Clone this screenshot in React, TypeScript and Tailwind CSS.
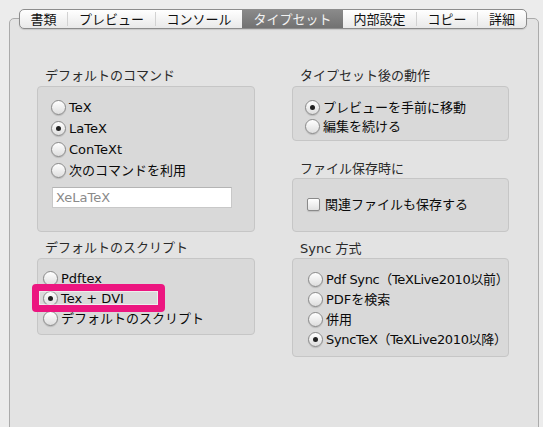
import type { ReactNode } from "react";

const FONT = '"DejaVu Sans", "Noto Sans CJK JP", sans-serif';

function Radio({ label, checked = false, tight = false }: { label: string; checked?: boolean; tight?: boolean }) {
  return (
    <div className="flex items-center gap-[3px]">
      <span className="flex h-[15px] w-[15px] shrink-0 items-center justify-center rounded-full border border-[#8a8a8a] bg-gradient-to-b from-[#ffffff] to-[#dedede] shadow-[0_1px_1px_rgba(0,0,0,0.15)]">
        {checked && <span className="h-[5px] w-[5px] rounded-full bg-[#222]" />}
      </span>
      <span className={`whitespace-nowrap text-[13px] leading-none text-[#0a0a0a] ${tight ? "tracking-[-0.35px]" : ""}`}>{label}</span>
    </div>
  );
}

function Section({ title, className = "", children }: { title: string; className?: string; children: ReactNode }) {
  return (
    <div className={className}>
      <div className="h-[16px] pl-[8px] text-[13px] leading-[16px] text-[#2a2a2a]">{title}</div>
      {children}
    </div>
  );
}

function GroupBox({ className = "", children }: { className?: string; children: ReactNode }) {
  return (
    <div className={`relative rounded-[4px] border border-[#c6c6c6] bg-[#d9d9d9] ${className}`}>
      {children}
    </div>
  );
}

const tabs: { label: string; w: string; selected?: boolean; sep?: boolean }[] = [
  { label: "書類", w: "w-[47px]", sep: true },
  { label: "プレビュー", w: "w-[87px]", sep: true },
  { label: "コンソール", w: "w-[86px]" },
  { label: "タイプセット", w: "w-[101px]", selected: true },
  { label: "内部設定", w: "w-[73px]", sep: true },
  { label: "コピー", w: "w-[60px]", sep: true },
  { label: "詳細", w: "w-[48px]" },
];

export default function App() {
  return (
    <div className="h-[427px] w-[543px] overflow-hidden bg-[#ececec] pt-[18px] pl-[9px]" style={{ fontFamily: FONT }}>
      <div className="relative h-[420px] w-[530px] rounded-t-[5px] border border-[#ababab] bg-[#e3e3e3]">
        {/* tab strip sitting on the panel's top edge */}
        <div className="absolute left-[9px] top-[-10px] flex h-[20px] w-[508px] items-center overflow-hidden rounded-[5px] border border-[#8c8c8c] bg-gradient-to-b from-[#ffffff] to-[#e9e9e9] shadow-[0_1px_1px_rgba(0,0,0,0.12)]">
          {tabs.map((t) => (
            <div key={t.label} className="flex h-full items-center">
              <div
                className={`flex h-full ${t.w} items-center justify-center text-[13px] leading-none ${
                  t.selected ? "bg-gradient-to-b from-[#8a8a8a] to-[#727272] text-[#f2f2f2]" : "text-[#111]"
                }`}
              >
                {t.label}
              </div>
              {t.sep && <div className="h-[14px] w-px bg-[#d2d2d2]" />}
            </div>
          ))}
        </div>

        <div className="flex gap-[37px] pt-[49px] pl-[27px]">
          {/* left column */}
          <div className="w-[218px]">
            <Section title="デフォルトのコマンド">
              <GroupBox className="mt-[2px] h-[146px] pt-[10px] pl-[13px]">
                <div className="flex flex-col">
                  <div className="flex h-[21px] items-center"><Radio label="TeX" /></div>
                  <div className="flex h-[21px] items-center"><Radio label="LaTeX" checked /></div>
                  <div className="flex h-[21px] items-center"><Radio label="ConTeXt" /></div>
                  <div className="flex h-[21px] items-center"><Radio label="次のコマンドを利用" /></div>
                </div>
                <div className="ml-px mt-[6px] flex h-[21px] w-[180px] items-center border border-[#c8c8c8] border-t-[#b4b4b4] bg-white pl-[3px] text-[13px] text-[#8a8a8a]">
                  XeLaTeX
                </div>
              </GroupBox>
            </Section>

            <Section title="デフォルトのスクリプト" className="mt-[8px]">
              <GroupBox className="mt-[2px] h-[77px] pt-[9px] pl-[5px]">
                <div className="flex flex-col">
                  <div className="flex h-[20px] items-center"><Radio label="Pdftex" /></div>
                  <div className="flex h-[20px] items-center"><Radio label="Tex + DVI" checked /></div>
                  <div className="flex h-[20px] items-center"><Radio label="デフォルトのスクリプト" /></div>
                </div>
                <div className="absolute left-[-6px] top-[25px] h-[28px] w-[133px] rounded-[4px] border-[7px] border-[#ec1680] shadow-[inset_0_0_0_1px_rgba(255,255,255,0.55)]" />
              </GroupBox>
            </Section>
          </div>

          {/* right column */}
          <div className="w-[217px]">
            <Section title="タイプセット後の動作">
              <GroupBox className="mt-[2px] h-[55px] pt-[11px] pl-[12px]">
                <div className="flex flex-col">
                  <div className="flex h-[19px] items-center"><Radio label="プレビューを手前に移動" checked /></div>
                  <div className="flex h-[19px] items-center"><Radio label="編集を続ける" /></div>
                </div>
              </GroupBox>
            </Section>

            <Section title="ファイル保存時に" className="mt-[20px]">
              <GroupBox className="mt-px h-[54px] pt-[15px] pl-[14px]">
                <div className="flex h-[20px] items-center gap-[5px]">
                  <span className="h-[13px] w-[13px] rounded-[2px] border border-[#8a8a8a] bg-gradient-to-b from-[#ffffff] to-[#e2e2e2] shadow-[0_1px_1px_rgba(0,0,0,0.12)]" />
                  <span className="text-[13px] leading-none text-[#0a0a0a]">関連ファイルも保存する</span>
                </div>
              </GroupBox>
            </Section>

            <Section title="Sync 方式" className="mt-[9px]">
              <GroupBox className="mt-px h-[99px] pt-[10px] pl-[15px]">
                <div className="flex flex-col">
                  <div className="flex h-[20px] items-center"><Radio label="Pdf Sync（TeXLive2010以前）" tight /></div>
                  <div className="flex h-[20px] items-center"><Radio label="PDFを検索" /></div>
                  <div className="flex h-[20px] items-center"><Radio label="併用" /></div>
                  <div className="flex h-[20px] items-center"><Radio label="SyncTeX（TeXLive2010以降）" checked tight /></div>
                </div>
              </GroupBox>
            </Section>
          </div>
        </div>
      </div>
    </div>
  );
}
